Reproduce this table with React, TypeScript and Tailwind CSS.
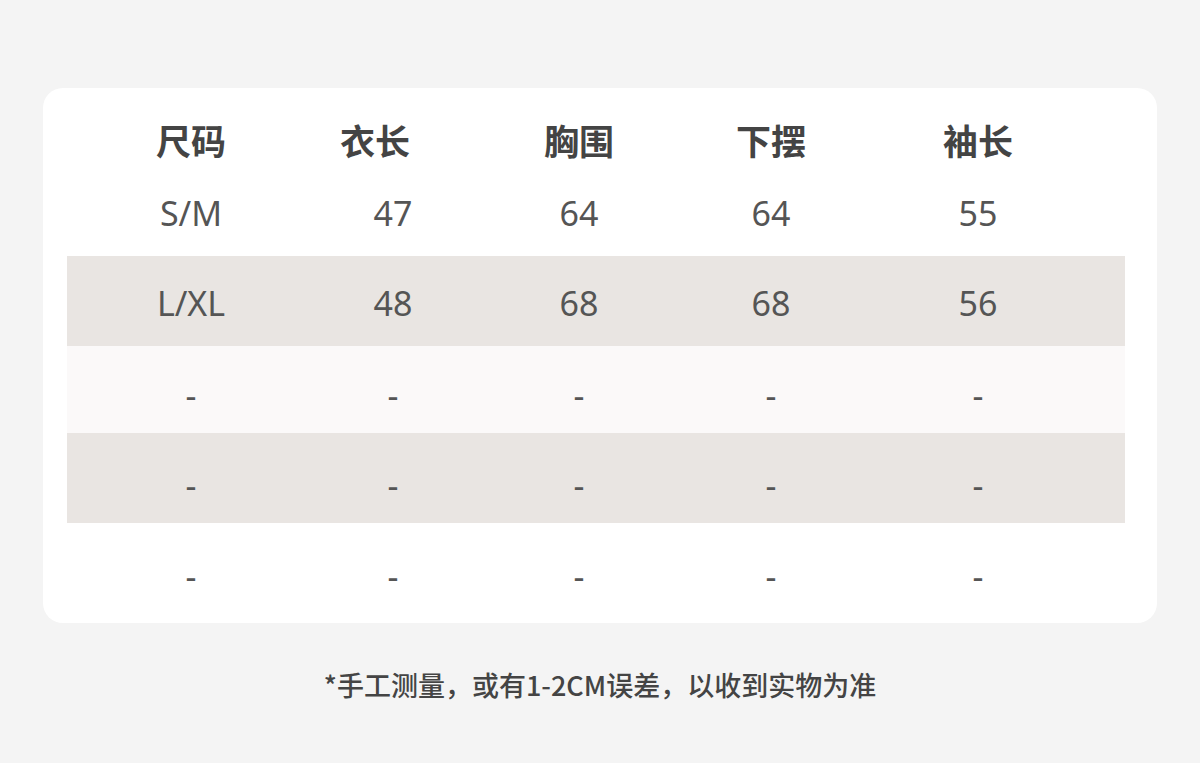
import { FunctionComponent } from "react";

const cols = "grid grid-cols-[248px_156px_216px_168px_246px_24px]";

const rows: { cells: string[]; bg: string; h: string }[] = [
  { cells: ["S/M", "47", "64", "64", "55"], bg: "bg-white", h: "h-[82px] pb-[4px]" },
  { cells: ["L/XL", "48", "68", "68", "56"], bg: "bg-[#e9e5e2]", h: "h-[90px] pt-[4px]" },
  { cells: ["-", "-", "-", "-", "-"], bg: "bg-[#fbf9f9]", h: "h-[87px] pt-[10px]" },
  { cells: ["-", "-", "-", "-", "-"], bg: "bg-[#e9e5e2]", h: "h-[90px] pt-[14px]" },
  { cells: ["-", "-", "-", "-", "-"], bg: "bg-white", h: "h-[100px] pt-[6px]" },
];

const headers = ["尺码", "衣长", "胸围", "下摆", "袖长"];

const App: FunctionComponent = () => {
  return (
    <div
      className="w-[1200px] h-[763px] bg-[#f4f4f4] flex flex-col items-center pt-[88px]"
      style={{ fontFamily: '"Noto Sans", "Noto Sans CJK SC", sans-serif' }}
    >
      <div className="w-[1114px] bg-white rounded-[20px] pt-[18px] pl-[24px] pr-[32px] overflow-hidden">
        <div className={`${cols} h-[68px] items-center text-[35px] font-bold text-[#444]`}>
          {headers.map((h, i) => (
            <div
              key={h}
              className={`text-center ${i === 1 ? "pr-[36px]" : ""}`}
              style={{ fontFamily: '"Noto Sans CJK SC", sans-serif' }}
            >
              {h}
            </div>
          ))}
        </div>
        {rows.map((r, ri) => (
          <div
            key={ri}
            className={`${cols} ${r.bg} ${r.h} items-center text-[34px] text-[#555] leading-none`}
          >
            {r.cells.map((c, ci) => (
              <div key={ci} className="text-center">
                {c}
              </div>
            ))}
            <div />
          </div>
        ))}
      </div>
      <div
        className="mt-[42px] text-[27px] font-medium text-[#444]"
        style={{ fontFamily: '"Noto Sans CJK SC", sans-serif' }}
      >
        *手工测量，或有1-2CM误差，以收到实物为准
      </div>
    </div>
  );
};

export default App;
